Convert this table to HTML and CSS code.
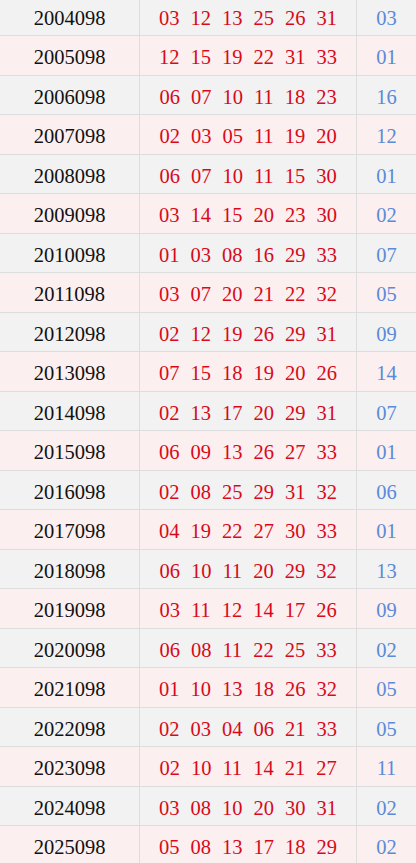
FILE: index.html
```html
<!DOCTYPE html>
<html lang="zh-CN">
  <head>
    <meta charset="UTF-8" />
    <meta name="viewport" content="width=device-width, initial-scale=1.0" />
    <title>历史同期开奖</title>
    <link rel="stylesheet" href="styles.css">
  </head>
  <body>
    <div id="list"></div>

    <script>
      var rows = [
        ["2004098", "03 12 13 25 26 31", "03"],
        ["2005098", "12 15 19 22 31 33", "01"],
        ["2006098", "06 07 10 11 18 23", "16"],
        ["2007098", "02 03 05 11 19 20", "12"],
        ["2008098", "06 07 10 11 15 30", "01"],
        ["2009098", "03 14 15 20 23 30", "02"],
        ["2010098", "01 03 08 16 29 33", "07"],
        ["2011098", "03 07 20 21 22 32", "05"],
        ["2012098", "02 12 19 26 29 31", "09"],
        ["2013098", "07 15 18 19 20 26", "14"],
        ["2014098", "02 13 17 20 29 31", "07"],
        ["2015098", "06 09 13 26 27 33", "01"],
        ["2016098", "02 08 25 29 31 32", "06"],
        ["2017098", "04 19 22 27 30 33", "01"],
        ["2018098", "06 10 11 20 29 32", "13"],
        ["2019098", "03 11 12 14 17 26", "09"],
        ["2020098", "06 08 11 22 25 33", "02"],
        ["2021098", "01 10 13 18 26 32", "05"],
        ["2022098", "02 03 04 06 21 33", "05"],
        ["2023098", "02 10 11 14 21 27", "11"],
        ["2024098", "03 08 10 20 30 31", "02"],
        ["2025098", "05 08 13 17 18 29", "02"]
      ];

      var list = document.getElementById("list");
      rows.map((r, i) => {
        var row = document.createElement("div");
        row.className = "row " + (i % 2 == 0 ? "even" : "odd");
        var reds = r[1]
          .split(" ")
          .map((n) => `<span>${n}</span>`)
          .join("");
        row.innerHTML =
          `<div class="issue">${r[0]}</div>` +
          `<div class="red">${reds}</div>` +
          `<div class="blue">${r[2]}</div>`;
        list.appendChild(row);
      });
    </script>
  </body>
</html>
```
FILE: styles.css
```css
body {
  margin: 0;
  font-family: "Liberation Serif", "Noto Sans CJK SC", serif;
  font-size: 20.5px;
}
#list {
  margin-top: -3.5px;
}
.row {
  display: grid;
  grid-template-columns: 140px 217px 1fr;
  height: 39.5px;
  box-sizing: border-box;
  border-bottom: 1px solid #dddddd;
}
.even {
  background: #f2f2f2;
}
.odd {
  background: #fcefef;
}
.row > div {
  display: flex;
  justify-content: center;
  align-items: center;
  padding-top: 5px;
}
.issue {
  border-right: 1px solid #dddddd;
  color: #111111;
}
.red {
  border-right: 1px solid #dddddd;
  color: #d80a1a;
  gap: 11px;
}
.blue {
  color: #5a8ad8;
}
```
